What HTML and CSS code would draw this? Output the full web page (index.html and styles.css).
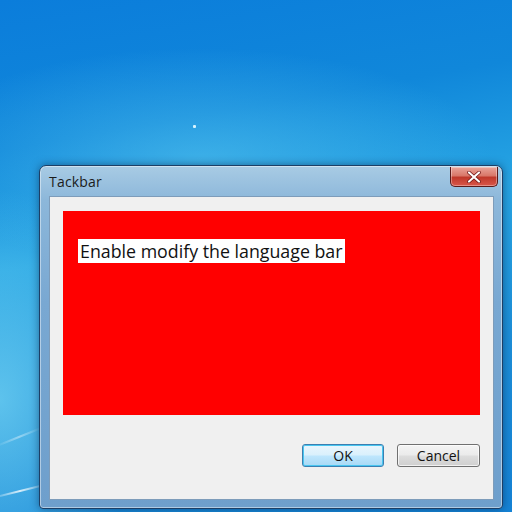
FILE: index.html
```html
<!DOCTYPE html>
<html lang="en">
<head>
    <meta charset="UTF-8">
    <title>Tackbar</title>
    <link rel="stylesheet" href="styles.css">
</head>
<body>
    <div class="desktop">
        <div class="streak streak-a"></div>
        <div class="streak streak-b"></div>
        <div class="spark"></div>

        <div class="window">
            <div class="titlebar">
                <span class="title">Tackbar</span>
                <button class="close" aria-label="Close">
                    <svg width="16" height="12" viewBox="0 0 16 12">
                        <path d="M3 1.5 L13 10.5 M13 1.5 L3 10.5" stroke="#6b1010" stroke-width="3.6" stroke-linecap="round"/>
                        <path d="M3 1.5 L13 10.5 M13 1.5 L3 10.5" stroke="#fff" stroke-width="2.2" stroke-linecap="round"/>
                    </svg>
                </button>
            </div>
            <div class="client">
                <div class="panel">
                    <span class="label">Enable modify the language bar</span>
                </div>
                <div class="actions">
                    <button class="btn btn-default">OK</button>
                    <button class="btn">Cancel</button>
                </div>
            </div>
        </div>
    </div>
</body>
</html>
```

FILE: styles.css
```css
* {
    margin: 0;
    padding: 0;
    box-sizing: border-box;
}

body {
    font-family: "Open Sans", "Noto Sans", sans-serif;
    width: 512px;
    height: 512px;
    overflow: hidden;
}

.desktop {
    position: relative;
    width: 512px;
    height: 512px;
    overflow: hidden;
    background:
        radial-gradient(ellipse 420px 160px at 200px 160px, rgba(90, 200, 240, 0.55), rgba(90, 200, 240, 0) 70%),
        radial-gradient(ellipse 200px 300px at 0px 400px, rgba(120, 215, 245, 0.7), rgba(120, 215, 245, 0) 70%),
        linear-gradient(170deg, #0b7ddb 0%, #1087da 25%, #27a5e3 45%, #1d8fd8 70%, #1583d6 100%);
}

/* faint light streaks in the lower left corner */
.streak {
    position: absolute;
    height: 2px;
    border-radius: 2px;
    background: linear-gradient(90deg, rgba(255, 255, 255, 0), rgba(255, 255, 255, 0.8), rgba(255, 255, 255, 0));
}

.streak-a {
    left: -10px;
    top: 490px;
    width: 60px;
    transform: rotate(-14deg);
}

.streak-b {
    left: -6px;
    top: 436px;
    width: 50px;
    opacity: 0.5;
    transform: rotate(-22deg);
}

.spark {
    position: absolute;
    left: 193px;
    top: 125px;
    width: 3px;
    height: 3px;
    background: #d8f4ff;
    border-radius: 1px;
}

.window {
    position: absolute;
    left: 39px;
    top: 165px;
    width: 464px;
    height: 344px;
    display: flex;
    flex-direction: column;
    padding: 0 8px 8px 9px;
    border: 1px solid #1d3f66;
    border-radius: 7px 7px 4px 4px;
    background: linear-gradient(180deg, #a8cbe4 0%, #8cb7da 10%, #79a8d2 40%, #6e9fcc 100%);
    box-shadow: 0 0 8px rgba(0, 30, 70, 0.5), inset 0 0 0 1px rgba(255, 255, 255, 0.45);
}

.titlebar {
    height: 30px;
    display: flex;
    align-items: flex-start;
    justify-content: space-between;
}

.title {
    font-size: 14px;
    color: #1b1b1b;
    padding-top: 6px;
    letter-spacing: 0.2px;
}

.close {
    width: 48px;
    height: 20px;
    margin-top: 1px;
    margin-right: -4px;
    display: flex;
    align-items: center;
    justify-content: center;
    border: 1px solid #5a1a1a;
    border-top: none;
    border-radius: 0 0 5px 5px;
    background: linear-gradient(180deg, #e9a59a 0%, #d9786a 45%, #c0392b 55%, #d8564a 100%);
    box-shadow: inset 0 0 0 1px rgba(255, 255, 255, 0.35);
}

.client {
    flex: 1;
    display: flex;
    flex-direction: column;
    background: #f0f0f0;
    border: 1px solid #7d9cba;
    padding: 14px 13px 32px 13px;
}

.panel {
    height: 204px;
    background: #ff0000;
    padding: 28px 15px;
}

.label {
    display: inline-block;
    height: 24px;
    line-height: 24px;
    padding: 0 2px 0 2px;
    background: #fff;
    font-size: 17.8px;
    color: #111;
}

.actions {
    margin-top: auto;
    display: flex;
    justify-content: flex-end;
    gap: 13px;
}

.btn {
    width: 83px;
    height: 23px;
    font-family: "Open Sans", "Noto Sans", sans-serif;
    font-size: 14px;
    color: #111;
    border: 1px solid #707070;
    border-radius: 3px;
    background: linear-gradient(180deg, #f4f4f4 0%, #ebebeb 48%, #dddddd 52%, #cfcfcf 100%);
    box-shadow: inset 0 0 0 1px rgba(255, 255, 255, 0.7);
}

.btn-default {
    width: 82px;
    border-color: #3c7fb1;
    background: linear-gradient(180deg, #eaf6fd 0%, #d9f0fc 48%, #bee6fd 52%, #a7d9f5 100%);
    box-shadow: inset 0 0 0 1px #48c6f0;
}
```
